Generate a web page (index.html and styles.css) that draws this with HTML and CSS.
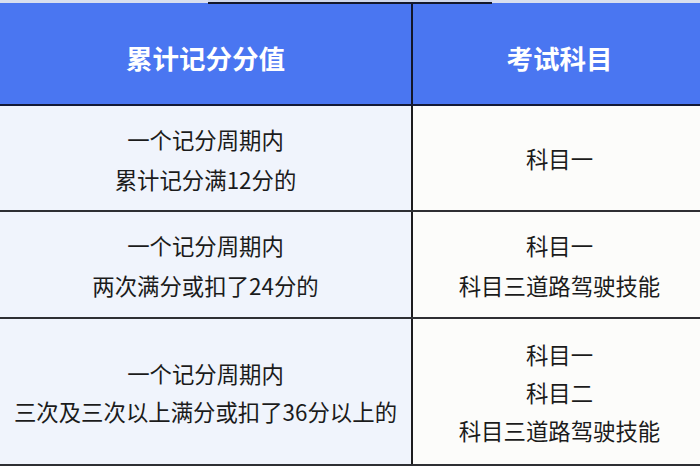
FILE: index.html
```html
<!DOCTYPE html>
<html lang="zh-CN">
<head>
<meta charset="utf-8">
<title>记分</title>
<link rel="stylesheet" href="styles.css">
</head>
<body>
<div class="table">
  <div class="topline"><span class="seg light s1"></span><span class="seg dark s2"></span><span class="seg light s3"></span></div>
  <div class="row head">
    <div class="cell left">累计记分分值</div>
    <div class="cell right">考试科目</div>
  </div>
  <div class="row r1">
    <div class="cell left"><p>一个记分周期内</p><p>累计记分满12分的</p></div>
    <div class="cell right"><p>科目一</p></div>
  </div>
  <div class="row r2">
    <div class="cell left"><p>一个记分周期内</p><p>两次满分或扣了24分的</p></div>
    <div class="cell right"><p>科目一</p><p>科目三道路驾驶技能</p></div>
  </div>
  <div class="row r3">
    <div class="cell left"><p>一个记分周期内</p><p>三次及三次以上满分或扣了36分以上的</p></div>
    <div class="cell right"><p>科目一</p><p>科目二</p><p>科目三道路驾驶技能</p></div>
  </div>
</div>
</body>
</html>
```
FILE: styles.css
```css
html, body {
  margin: 0;
  padding: 0;
  background: #ffffff;
}
body {
  width: 700px;
  height: 470px;
  overflow: hidden;
  font-family: "Noto Sans CJK SC", "Noto Sans", sans-serif;
}
.table {
  width: 700px;
  display: flex;
  flex-direction: column;
}
.topline {
  display: flex;
  height: 4px;
  background: #4a76f1;
}
.seg.light { background: linear-gradient(#d9dfef 0 3px, #4a76f1 3px); }
.seg.dark { background: linear-gradient(#cfd6ea 0 2px, #14182c 2px 4px); }
.s1 { width: 208px; }
.s2 { width: 284px; }
.s3 { flex: 1; }
.row {
  display: grid;
  grid-template-columns: 411px 1fr;
  border-bottom: 2px solid #2e2f33;
}
.cell {
  display: flex;
  flex-direction: column;
  align-items: center;
  justify-content: center;
  text-align: center;
  color: #1b1b1b;
  font-size: 22.4px;
  white-space: nowrap;
}
.cell p {
  margin: 0;
  line-height: 40px;
}
.cell.left {
  background: #f0f4fc;
}
.cell.right {
  background: #fcfcfa;
  border-left: 2px solid #1c1c1e;
  padding-left: 6px;
}
.head {
  height: 100px;
  border-bottom: 2px solid #141a36;
}
.head .cell {
  background: #4a76f1;
  color: #ffffff;
  font-weight: 700;
  font-size: 26.5px;
  padding-top: 6px;
  padding-bottom: 0;
}
.head .cell.right {
  border-left: 2px solid #12162a;
  background: #4a76f1;
}
.r1 { height: 104px; }
.r1 .cell.left { padding-top: 2px; }
.r2 { height: 105px; }
.r3 { height: 145px; }
.r3 .cell p { line-height: 38px; }
```
